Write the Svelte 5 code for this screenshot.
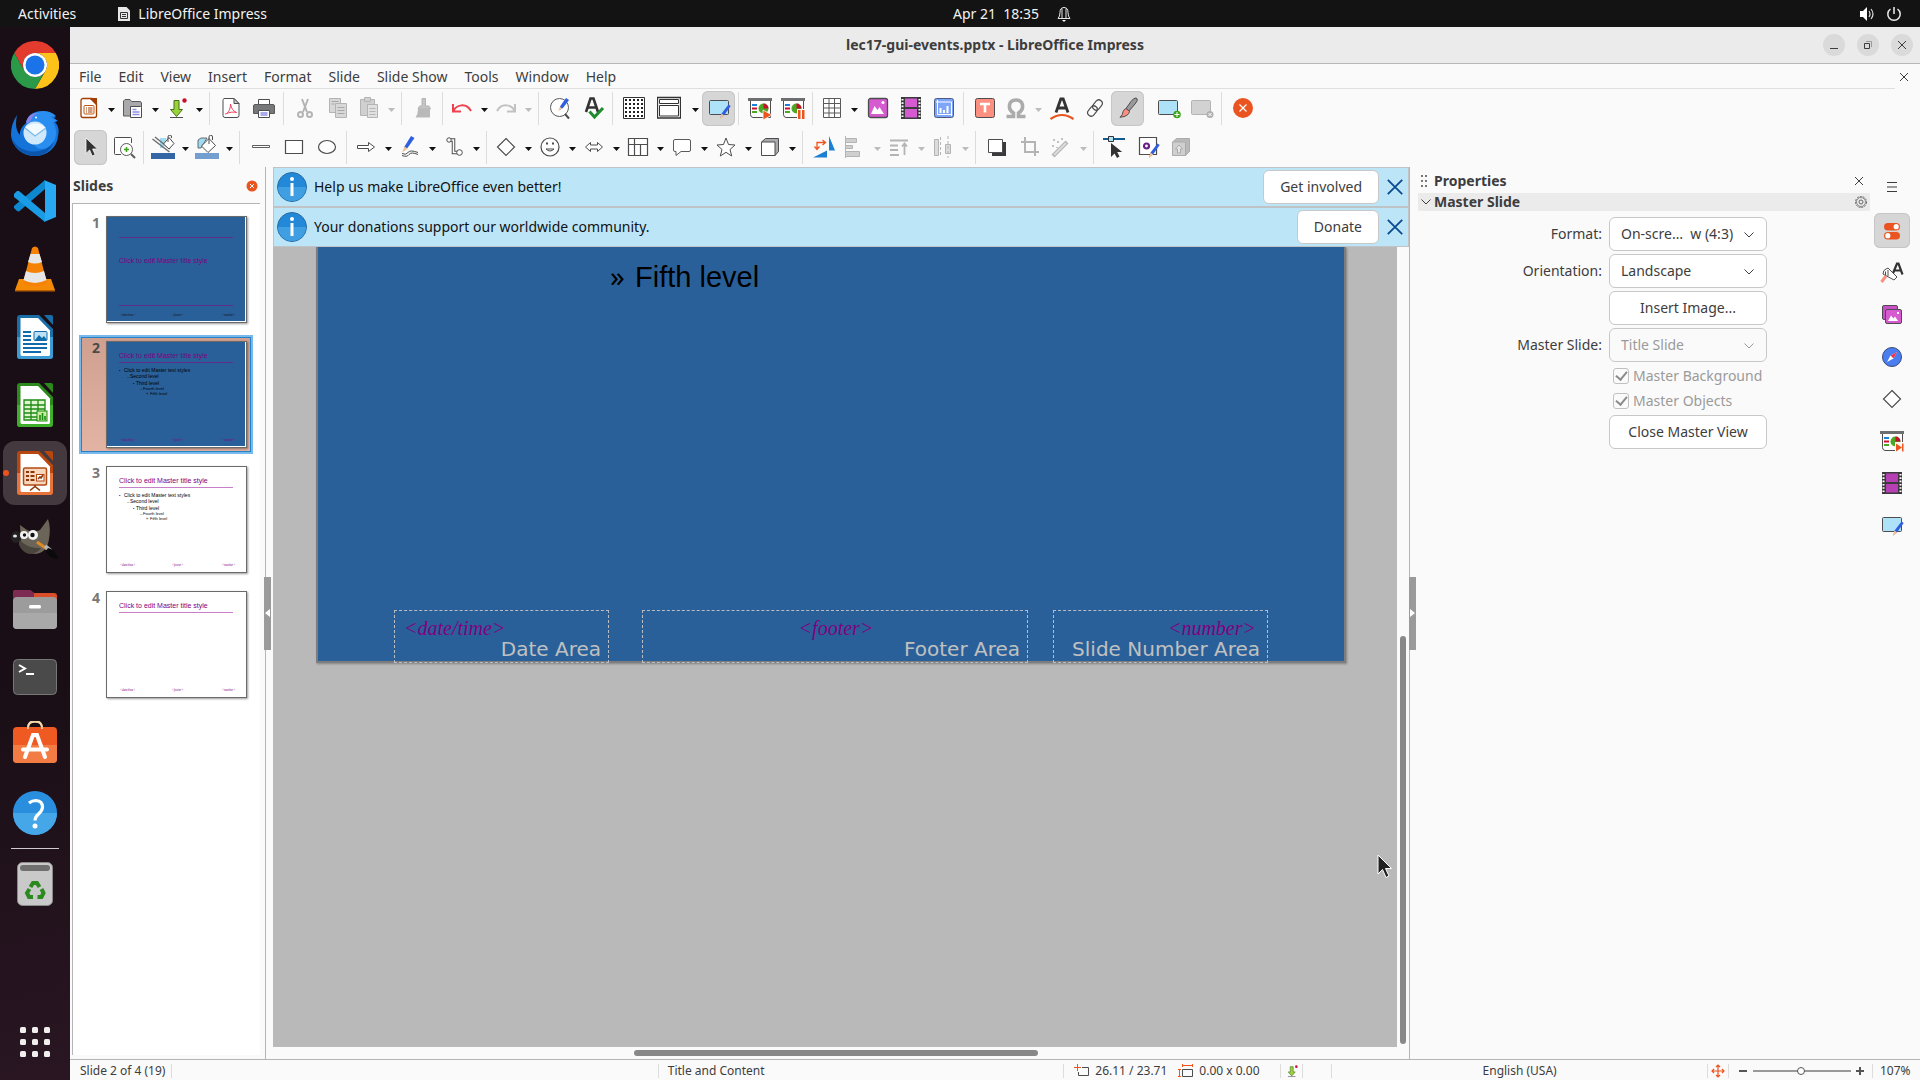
<script lang="ts">
	interface Tool {
		icon?: string,
		label?: string,
		menu?: boolean,
		off?: boolean,
		on?: boolean,
		wide?: boolean,
		sep?: boolean,
		gap?: boolean,
	}

	const menus = ["File", "Edit", "View", "Insert", "Format", "Slide", "Slide Show", "Tools", "Window", "Help"];

	const standardBar: Tool[] = [
		{ icon: "new", label: "New", menu: true },
		{ icon: "open", label: "Open", menu: true },
		{ icon: "save", label: "Save", menu: true },
		{ sep: true },
		{ icon: "pdf", label: "Export as PDF" },
		{ icon: "print", label: "Print" },
		{ sep: true },
		{ icon: "cut", label: "Cut", off: true },
		{ icon: "copy", label: "Copy", off: true },
		{ icon: "paste", label: "Paste", off: true, menu: true },
		{ sep: true },
		{ icon: "clone", label: "Clone Formatting", off: true },
		{ sep: true },
		{ icon: "undo", label: "Undo", menu: true },
		{ icon: "redo", label: "Redo", off: true, menu: true },
		{ sep: true },
		{ icon: "find", label: "Find and Replace" },
		{ icon: "spell", label: "Spelling" },
		{ sep: true },
		{ icon: "grid", label: "Display Grid" },
		{ icon: "views", label: "Display Views", menu: true, wide: true },
		{ icon: "master", label: "Master Slide", on: true },
		{ sep: true },
		{ icon: "play", label: "Start from First Slide" },
		{ icon: "playcur", label: "Start from Current Slide" },
		{ sep: true },
		{ icon: "table", label: "Table", menu: true },
		{ icon: "image", label: "Insert Image" },
		{ icon: "film", label: "Insert Audio or Video" },
		{ icon: "chart", label: "Insert Chart" },
		{ sep: true },
		{ icon: "textbox", label: "Insert Text Box" },
		{ icon: "omega", label: "Special Character", off: true, menu: true },
		{ icon: "fontwork", label: "Fontwork" },
		{ icon: "link", label: "Hyperlink" },
		{ icon: "draw", label: "Show Draw Functions", on: true },
		{ gap: true },
		{ icon: "newmaster", label: "New Master" },
		{ icon: "delmaster", label: "Delete Master", off: true },
		{ sep: true },
		{ icon: "closemaster", label: "Close Master View" },
	];

	const drawingBar: Tool[] = [
		{ icon: "select", label: "Select", on: true },
		{ icon: "zoom", label: "Zoom & Pan" },
		{ sep: true },
		{ icon: "linecolor", label: "Line Color", menu: true },
		{ icon: "fillcolor", label: "Fill Color", menu: true },
		{ sep: true },
		{ icon: "line", label: "Line" },
		{ icon: "rect", label: "Rectangle" },
		{ icon: "ellipse", label: "Ellipse" },
		{ sep: true },
		{ icon: "arrow", label: "Lines and Arrows", menu: true },
		{ icon: "curve", label: "Curves and Polygons", menu: true },
		{ icon: "connector", label: "Connectors", menu: true },
		{ sep: true },
		{ icon: "diamond", label: "Basic Shapes", menu: true },
		{ icon: "smile", label: "Symbol Shapes", menu: true },
		{ icon: "blockarrow", label: "Block Arrows", menu: true },
		{ icon: "flow", label: "Flowchart", menu: true },
		{ icon: "callout", label: "Callouts", menu: true },
		{ icon: "star", label: "Stars and Banners", menu: true },
		{ icon: "cube", label: "3D Objects", menu: true },
		{ sep: true },
		{ icon: "rotate", label: "Rotate" },
		{ icon: "align", label: "Align Objects", off: true, menu: true },
		{ icon: "arrange", label: "Arrange", off: true, menu: true },
		{ icon: "distribute", label: "Distribute", off: true, menu: true },
		{ sep: true },
		{ icon: "shadow", label: "Shadow" },
		{ icon: "crop", label: "Crop Image", off: true },
		{ icon: "wand", label: "Filter", off: true, menu: true },
		{ sep: true },
		{ icon: "points", label: "Points" },
		{ icon: "glue", label: "Glue Points" },
		{ icon: "extrude", label: "Toggle Extrusion", off: true },
	];

	const sideTabs = [
		{ icon: "tabprops", label: "Properties", on: true },
		{ icon: "tabstyles", label: "Styles" },
		{ icon: "tabgallery", label: "Gallery" },
		{ icon: "tabnav", label: "Navigator" },
		{ icon: "diamond", label: "Shapes" },
		{ icon: "tabtrans", label: "Slide Transition" },
		{ icon: "tabfilm", label: "Animation" },
		{ icon: "master", label: "Master Slides" },
	];

	const pencil = `<path d="M21.5 8.500l2.200 1.400-6.700 9.600-3.600 2.500 1-4.200z" fill="#2f5fe0"/><path d="M14.500 17.600l2.600 1.900-4.200 3.700z" fill="#f6c192"/>`;
	const board = `<path d="M2.500 4.500v14a3 3 0 0 0 2.500 3h17.500v-17z" fill="#fff" stroke="#4d4d4f"/><path d="M0 2h24v3H0z" fill="#6d6e70"/><path d="M4 8h5v2H4z" fill="#1e7fd6"/><path d="M4 11.500h5v2H4z" fill="#c8102e"/><path d="M4 15h5v2H4z" fill="#4aa822"/><circle cx="15.500" cy="12.500" r="5" fill="#4aa822"/><path d="M15.500 12.500v-5a5 5 0 0 1 5 5z" fill="#c8102e"/>`;
	const holes = [0, 1, 2, 3, 4, 5].map((i) => `<path d="M2.500 ${3 + i * 3.3}h2v1.600h-2zM19.500 ${3 + i * 3.3}h2v1.600h-2z" fill="#fff"/>`).join("");
	const film = (c: string) => `<path d="M2 1h20v22H2z" fill="#3a3a3c"/>${holes}<path d="M6 2.500h12v8.500H6zM6 13h12v8.500H6z" fill="${c}"/>`;
	const dots = [3, 7, 11, 15, 19].map((y) => [3, 7, 11, 15, 19].map((x) => `<path d="M${x} ${y}h2v2h-2z"/>`).join("")).join("");

	const icons: Record<string, string> = {
		new: `<path d="M6 2.500h9l4.500 5v12a2 2 0 0 1-2 2H6a2 2 0 0 1-2-2v-15a2 2 0 0 1 2-2z" fill="#fff" stroke="#a33e03" stroke-width="1.300"/><path d="M12 2h8v8z" fill="#a33e03"/><rect x="7" y="9.500" width="10" height="8.500" rx="1" fill="none" stroke="#c2560f"/><path d="M9 12h1M9 14h1M9 16h1M11 12h4.500M11 14h4.500M11 16h4.500" stroke="#a33e03"/>`,
		open: `<path d="M2.500 20V5l1.500-1.500h5l1.500 2h9l1 1.500v13z" fill="#a9a9ab" stroke="#5a5a5c"/><path d="M9.500 10.500h10l1 1v10h-11z" fill="#fff" stroke="#4d4d4f"/><path d="M11.500 13.500h4M11.500 16h7M11.500 18.500h7" stroke="#8f8fe6" stroke-width="1.300"/>`,
		save: `<path d="M9 4.500h5v9h3.500l-6 7-6-7H9z" fill="#97d43a" stroke="#4d6b1f"/><path d="M5 21.500h13" stroke="#4d4d4f"/><circle cx="19.500" cy="4.500" r="2.200" fill="#c8102e"/>`,
		pdf: `<path d="M5 2.500h10l5 5v12a2 2 0 0 1-2 2H6a2 2 0 0 1-2-2v-15a2 2 0 0 1 1-2z" fill="#fff" stroke="#4d4d4f"/><path d="M15 2.500v5h5z" fill="#c9c9cb" stroke="#4d4d4f"/><path d="M6.500 18c3-1 5-5 5-10 .5 4 3 7.500 6 8.500-3-.8-7-.5-11 1.500z" fill="none" stroke="#f2415a"/>`,
		print: `<path d="M6.500 9V3.500h11V9" fill="#fff" stroke="#4d4d4f"/><path d="M3 8.500h18q1.500 0 1.500 1.500v7.500h-21V10q0-1.500 1.500-1.500z" fill="#77787a" stroke="#5a5a5c"/><path d="M6.500 14.500h11v7h-11z" fill="#fff" stroke="#4d4d4f"/><path d="M8.500 17h7M8.500 19h7" stroke="#8f8fe6" stroke-width="1.300"/>`,
		cut: `<g fill="none" stroke="#b4b4b4" stroke-width="2"><path d="M9 3l5 13M15 3l-5 13"/><circle cx="7.500" cy="18.500" r="2.500"/><circle cx="16.500" cy="18.500" r="2.500"/></g>`,
		copy: `<g fill="#d8d8d8" stroke="#b4b4b4"><path d="M3.500 2.500h11v14h-11z"/><path d="M9.500 7.500h11v14h-11z"/><path d="M5.500 5.500h7M5.500 8h3M11.500 11.500h7M11.500 14.500h7M11.500 17.500h7" stroke="#a8a8a8"/></g>`,
		paste: `<g fill="#d0d0d0" stroke="#b4b4b4"><path d="M3.500 3.500h14v16h-14z"/><path d="M7.500 1.500h6v4h-6z"/><path d="M10.500 8.500h10v13h-10z" fill="#e0e0e0"/><path d="M12.500 12.500h6M12.500 15.500h6M12.500 18.500h6"/></g>`,
		clone: `<path d="M11 2.500h3.500v7.500H18l1.500 3H7l1.500-3H11z" fill="#c4c4c4" stroke="#b4b4b4"/><path d="M7 13h12v8.500H4.500Q7 18 7 13z" fill="#b9b9b9"/>`,
		undo: `<path d="M3 8v7.500h8M3.500 15C6 9 16 6 21 15" fill="none" stroke="#f0414e" stroke-width="2"/>`,
		redo: `<path d="M21 8v7.500h-8M20.500 15C18 9 8 6 3 15" fill="none" stroke="#c2c2c2" stroke-width="2"/>`,
		find: `<circle cx="11.500" cy="11.500" r="9" fill="#fff" stroke="#5a5a5c"/><path d="M17 18l4 4.500" stroke="#4d4d4f" stroke-width="2"/><path d="M18 2l3 2-6 8-3.500 2 .8-4z" fill="#2f5fe0"/><path d="M12 11l2.300 1.600L10 15z" fill="#f6c192"/>`,
		spell: `<path d="M5 16L9.500 2.500h3L17 16M7 11.500h8.500" fill="none" stroke="#333" stroke-width="2.600"/><path d="M8.500 15.500l5 5.500 8.500-9" fill="none" stroke="#1e8c2c" stroke-width="3"/>`,
		grid: `<path d="M1.500 1.500h21v21h-21z" fill="#fff" stroke="#333"/><g fill="#222">${dots}</g>`,
		views: `<path d="M.500 1.500h23v20.500H.500z" fill="#fff" stroke="#333" stroke-width="1.300"/><path d="M2.500 3.500h19v4h-19zM2.500 9.500h19v10.500h-19z" fill="none" stroke="#333"/>`,
		master: `<rect x="2.500" y="4.500" width="19" height="14" rx="1" fill="#aee2f8" stroke="#4d4d4f"/>${pencil}`,
		play: `${board}<path d="M15 14l9 5-9 5z" fill="#f0541e" stroke="#fafafa" stroke-width=".8"/>`,
		playcur: `${board}<path d="M16 13h8v10h-8z" fill="#fafafa"/><path d="M17 14h2.500v9H17zM21 14h2.500v9H21z" fill="#f0541e"/>`,
		table: `<path d="M3.500 2.500h17v19h-17zM3.500 7.500h17M3.500 12h17M3.500 17h17M9 2.500v19M14.500 2.500v19" fill="#fff" stroke="#5a5a5c"/>`,
		image: `<rect x="2.500" y="2.500" width="19" height="19" rx="2" fill="#d65ad0" stroke="#4d4d4f" stroke-width="1.300"/><path d="M5 18l3.500-8 3 4 2-3 4.500 7z" fill="#fff"/><circle cx="17" cy="6.500" r="1.500" fill="#fff"/>`,
		film: film("#d65ad0"),
		chart: `<rect x="2.500" y="2.500" width="19" height="19" rx="2" fill="#7fa5f8" stroke="#4d5a80"/><path d="M5.500 4v14.500H20M4 6h15.500V20" fill="none" stroke="#fff"/><path d="M7.500 12h2v5h-2zM11 14h2v3h-2zM14.500 10h2v7h-2z" fill="#fff"/>`,
		textbox: `<rect x="2.500" y="2.500" width="19" height="19" rx="2" fill="#fb8f80" stroke="#4d4d4f"/><path d="M7 8h10M12 8v8.500" stroke="#fff" stroke-width="2.600"/>`,
		omega: `<path d="M2.500 20.500h7v-3.500C3.500 13.500 4 4 12 4s8.500 9.500 2.500 13v3.500h7" fill="none" stroke="#ababab" stroke-width="3.600"/>`,
		fontwork: `<path d="M6 16.500L10.800 3h2.400L18 16.500M8 12h8" fill="none" stroke="#333" stroke-width="2.800"/><path d="M.500 23q11.500-8 23 0" fill="none" stroke="#e8541e" stroke-width="2.200"/>`,
		link: `<g fill="none" stroke="#4d4d4f" stroke-width="1.200"><rect x="11" y="3.500" width="7" height="11" rx="3.500" transform="rotate(40 14.500 9)"/><rect x="6" y="9.500" width="7" height="11" rx="3.500" transform="rotate(40 9.500 15)"/></g>`,
		draw: `<path d="M20 2q3 1-1 6l-6 7-3-2.500 5-7q3-4 5-3.500z" fill="#9a9a9c" stroke="#4d4d4f"/><path d="M10 12.500l3.500 2.800q-.5 5-9.500 6 3-2.500 3-5.500 1-2.500 3-3.300z" fill="#fb8f80" stroke="#4d4d4f"/>`,
		newmaster: `<rect x="1.500" y="4.500" width="19" height="14" rx="1" fill="#aee2f8" stroke="#4d4d4f"/><circle cx="20" cy="18.500" r="3.800" fill="#3fa31b"/><path d="M20 16v5M17.500 18.500h5" stroke="#fff"/>`,
		delmaster: `<rect x="1.500" y="4.500" width="19" height="14" rx="1" fill="#d2d2d2" stroke="#b4b4b4"/><circle cx="20" cy="18.500" r="3.500" fill="#b0b0b0"/><path d="M18.500 17l3 3M21.500 17l-3 3" stroke="#fff"/>`,
		closemaster: `<circle cx="12" cy="12" r="10" fill="#ea5421"/><path d="M8.500 8.500l7 7M15.500 8.500l-7 7" stroke="#fff" stroke-width="1.200"/>`,
		select: `<path d="M7 3v15.500l3.600-3.500 2.600 6 3-1.300-2.600-5.700h5z" fill="#333" stroke="#fafafa" stroke-width=".8"/>`,
		zoom: `<path d="M19.500 8V3.500a1 1 0 0 0-1-1h-15a1 1 0 0 0-1 1v15a1 1 0 0 0 1 1H9" fill="#fff" stroke="#4d4d4f"/><circle cx="14.500" cy="14.500" r="6" fill="#fff" stroke="#5a5a5c"/><path d="M19 19l4 4" stroke="#5a5a5c" stroke-width="2"/><path d="M14.500 12v5M12 14.500h5" stroke="#3fa31b" stroke-width="1.500"/>`,
		linecolor: `<path d="M9 3h6v4l-3 6H9z" fill="#9fdcf3"/><path d="M1.500 4l17 13M4 2l15 12" stroke="#6d6e70" stroke-width="1.500"/><path d="M18 2.500l5 6-5 5.500-5.500-5z" fill="#fff" stroke="#4d4d4f"/><path d="M17 7V2q0-2 2-2t1.500 3" fill="none" stroke="#4d4d4f"/><path d="M0 18h24v6H0z" fill="#3465a4"/>`,
		fillcolor: `<path d="M3 13V5l3-2h6L6 13z" fill="#9fdcf3" stroke="#4d4d4f" stroke-width=".8"/><path d="M14 3.500l6.500 7L13 17.500 6.500 11z" fill="#fff" stroke="#4d4d4f"/><path d="M14 9V2q0-1.800 1.800-1.800T17.500 2v3" fill="none" stroke="#4d4d4f"/><path d="M0 18h24v6H0z" fill="#729fcf"/>`,
		line: `<path d="M3.500 10.500h17v2h-17z" fill="#fff" stroke="#4d4d4f" stroke-width=".9"/>`,
		rect: `<path d="M3.500 5.500h17v13h-17z" fill="#fff" stroke="#4d4d4f" stroke-width="1.200"/>`,
		ellipse: `<ellipse cx="12" cy="12" rx="8.500" ry="6.500" fill="#fff" stroke="#4d4d4f" stroke-width="1.200"/>`,
		arrow: `<path d="M3.500 10.500h11v-3l6 4.500-6 4.500v-3h-11z" fill="#fff" stroke="#4d4d4f"/>`,
		curve: `<path d="M13 1l3.500 2-7 10-4 3 1-4.500z" fill="#2f5fe0"/><path d="M6.500 11.500L9.500 13.500 4 17.500z" fill="#f6c192"/><path d="M4 18.500q4 2 6-1t10 0M4 20.500q5 2 7-1t9 0" fill="none" stroke="#4d4d4f"/>`,
		connector: `<path d="M8 5h3.500v12.500H17" fill="none" stroke="#4d4d4f" stroke-width="3.500"/><path d="M8 5h3.500v12.500H17" fill="none" stroke="#fff" stroke-width="1.500"/><circle cx="7" cy="5" r="2.200" fill="#fff" stroke="#4d4d4f"/><circle cx="17.500" cy="17.500" r="2.800" fill="#fff" stroke="#4d4d4f"/>`,
		diamond: `<path d="M12 3.500l8.500 8.500-8.500 8.500L3.500 12z" fill="#fff" stroke="#4d4d4f" stroke-width="1.200"/>`,
		smile: `<circle cx="12" cy="12" r="9" fill="#fff" stroke="#4d4d4f" stroke-width="1.200"/><path d="M8 7.500h2v2H8zM14 7.500h2v2h-2z" fill="#4d4d4f"/><path d="M8 14q4 4 8 0z" fill="#fff" stroke="#4d4d4f"/>`,
		blockarrow: `<path d="M3.500 12l5-4.500v2.500h7V7.500l5 4.500-5 4.500V14h-7v2.500z" fill="#fff" stroke="#4d4d4f"/>`,
		flow: `<path d="M2.500 3.500h19v17h-19zM2.500 9.500h19M8.500 3.500v17M14.500 9.500v11" fill="#fff" stroke="#4d4d4f" stroke-width="1.200"/>`,
		callout: `<path d="M5 4.500h14q1.500 0 1.500 1.500v9q0 1.500-1.500 1.500h-8L6 20.500v-4H5Q3.500 16.500 3.500 15V6Q3.500 4.500 5 4.500z" fill="#fff" stroke="#5a5a5c"/>`,
		star: `<path d="M12 3l2.500 6.500 6.500.5-5 4.500 1.700 6.500L12 17.300 6.300 21 8 14.500 3 10l6.500-.5z" fill="#fff" stroke="#4d4d4f"/>`,
		cube: `<path d="M3.500 7l4-3.500h13v13L17 20.500z" fill="#a9a9ab" stroke="#4d4d4f"/><path d="M3.500 7H17v13.500H3.500z" fill="#fff" stroke="#4d4d4f"/>`,
		rotate: `<path d="M17 1l6 14.500h-6zM1 22.500l14-7v7z" fill="#1b7fd4"/><path d="M5 14V7.500h8M2.500 11.500L5 14.500l2.500-3M10.500 5l3 2.500-3 2.500" fill="none" stroke="#f0541e" stroke-width="1.300"/>`,
		align: `<path d="M2.500 1v22" stroke="#b4b4b4"/><g fill="#cfcfcf" stroke="#b4b4b4"><path d="M2.500 3.500h11v4h-11zM2.500 10.500h7v3h-7zM2.500 16.500h14v5h-14z"/></g>`,
		arrange: `<path d="M3 5.500h18M3 10.500h8M3 15h8M3 20h9M17.500 20V9M15 11.500L17.500 8.500l2.500 3" fill="none" stroke="#b4b4b4" stroke-width="1.800"/>`,
		distribute: `<g fill="#dcdcdc" stroke="#b4b4b4"><path d="M3.500 4.500h4v16h-4zM14.500 9.500h5v9h-5z"/><path d="M9.500 2v20M17 1v22" stroke-dasharray="3 2"/></g>`,
		shadow: `<path d="M7 7h14v14H7z" fill="#3a3a3c"/><path d="M3.500 4.500h14v13h-14z" fill="#fff" stroke="#4d4d4f"/>`,
		crop: `<path d="M7 2v15h14M3 7h14v14" fill="none" stroke="#b4b4b4" stroke-width="2"/>`,
		wand: `<path d="M4 21L18 7" stroke="#b4b4b4" stroke-width="4"/><path d="M5 20L17 8" stroke="#dcdcdc" stroke-width="2"/><path d="M5 4v2M9 6v2M13 3v2M4 10v2M8 12v1" stroke="#b4b4b4" stroke-width="1.600"/>`,
		points: `<path d="M0 4h22" stroke="#0f5c91" stroke-width="2"/><path d="M5.500 1.500h5v5h-5z" fill="#aee2f8" stroke="#333"/><path d="M8 8v14l3.500-3.500 2.500 4.500 2.500-1.500-2.300-4.500h5z" fill="#333"/>`,
		glue: `<path d="M3.500 2.500h17v17h-17z" fill="#fff" stroke="#4d4d4f" stroke-width="1.200"/><circle cx="10.500" cy="11" r="2.500" fill="#fff" stroke="#6b1f86" stroke-width="2.200"/>${pencil}`,
		extrude: `<path d="M3.500 7l4-3.500h13v13l-4 4z" fill="#b9b9b9" stroke="#ababab"/><path d="M3.500 7h13v13.500h-13z" fill="#cfcfcf" stroke="#ababab"/><path d="M8.500 18v-4h-2L10 10l3.500 4h-2v4z" fill="#e6e6e6" stroke="#ababab"/>`,
		tabprops: `<rect x="4" y="4" width="16" height="7.500" rx="3.750" fill="#ea5421"/><circle cx="16.200" cy="7.700" r="2.600" fill="#fff"/><rect x="4" y="13" width="16" height="7.500" rx="3.750" fill="#ea5421"/><circle cx="7.800" cy="16.700" r="2.600" fill="#fff"/>`,
		tabstyles: `<path d="M12.500 13.500L17 2.500h1.500l4 11M14 9.500h6.500" fill="none" stroke="#333" stroke-width="2.200"/><path d="M3 13q0-4 3-5l2-1 9 9-3 3z" fill="#fff" stroke="#4d4d4f"/><path d="M6 15l-4.500 6" stroke="#fb8f80" stroke-width="3"/><path d="M5.500 14V10.500M8 15V9" stroke="#4d4d4f"/>`,
		tabgallery: `<rect x="2.500" y="2.500" width="15" height="14" rx="1.500" fill="#c94fc6" stroke="#4d4d4f"/><rect x="5.500" y="6.500" width="16" height="14" rx="1.500" fill="#d65ad0" stroke="#4d4d4f"/><path d="M8 18l3-5.500 2.500 3 1.500-2 3 4.500z" fill="#fff"/><path d="M17 9h2v2h-2z" fill="#fff"/>`,
		tabnav: `<circle cx="12" cy="12" r="9.500" fill="#4a7df0" stroke="#3a4a78"/><path d="M17 7l-3.500 6.500L7 17l3.500-6.500z" fill="#fff"/><path d="M17 7l-3.500 6.500-3-3z" fill="#e8384f"/>`,
		tabtrans: `${board}<path d="M15 13h9v10h-9z" fill="#fafafa"/><path d="M16 14.500l6 4-6 4zM22 14.500h1.500v8H22z" fill="#f0541e"/>`,
		tabfilm: film("#b63fb4"),
	};

	// LibreOffice document icon: colored frame, cut corner
	function docIcon(dark: string, light: string, inner: string) {
		return `<path d="M9 2h19l14 14v27a3 3 0 0 1-3 3H9a3 3 0 0 1-3-3V5a3 3 0 0 1 3-3z" fill="${dark}"/>
			<path d="M6 24h36v19a3 3 0 0 1-3 3H9a3 3 0 0 1-3-3z" fill="${light}"/>
			<path d="M9.500 5h17.500L39 17.500V42l-1 1H10.500l-1-1z" fill="#fff"/>
			<path d="M33 2h7a2 2 0 0 1 2 2v8z" fill="${dark}"/>${inner}`;
	}

	const dock = [
		{ label: "Google Chrome", art: `<path d="M3.200 12A24 24 0 0 1 44.800 12H24A12 12 0 0 0 13.600 30z" fill="#e33b2e"/><path d="M44.800 12A24 24 0 0 1 24 48L34.400 30A12 12 0 0 0 24 12z" fill="#fdc21a"/><path d="M24 48A24 24 0 0 1 3.200 12L13.600 30A12 12 0 0 0 34.400 30z" fill="#2a9a48"/><circle cx="24" cy="24" r="12" fill="#fff"/><circle cx="24" cy="24" r="9.500" fill="#1a73e8"/>` },
		{ label: "Thunderbird", art: `<path d="M6 6Q0 15 0 26a24 22 0 0 0 24 21 23 21 0 0 0 23-20Q49 18 44 13l3-1-4-3 2-1-5-3Q30 0 22 4q-6 3-7 10Q8 20 9 26 3 20 6 6z" fill="#1373d9"/><path d="M17 13q3-11 15-11 8 0 13 5l-5 1 6 4-4 1q5 8 2 17-4 10-13 10-8 0-8-8z" fill="#2a8df0"/><path d="M15 13Q18 3 28 4q-6 1-8 7l-4 4z" fill="#8f82e8"/><path d="M0 24q2 14 17 18 16 3 26-9-6 14-19 14Q3 46 0 24z" fill="#0b55ad"/><circle cx="24" cy="24" r="11.500" fill="#cfe9fb"/><path d="M14 19q10-9 21 0l-10 8z" fill="#f2faff"/><path d="M14 19l10 8 11-8" fill="none" stroke="#7db9e8" stroke-width="1.300"/><circle cx="25" cy="8.500" r="1" fill="#fff"/>` },
		{ label: "Visual Studio Code", art: `<path d="M3 31l3 3 2 .500L34 12V3L3 29z" fill="#0d87cf"/><path d="M3 17l3-3h2L34 36v9L3 20z" fill="#1a9be6"/><path d="M33 3l12 5v32l-12 5q1 0 1-3V6q0-3-1-3z" fill="#27a9f3"/>` },
		{ label: "VLC media player", art: `<path d="M8 34h32l4 11H4z" fill="#f58a07"/><path d="M4 45h40v1.500H4z" fill="#b85c00"/><path d="M21 3q3-3 6 0l9 35q-12 7-24 0z" fill="#f58207"/><path d="M19.500 9h9l2.500 8q-7 3-14 0zM15 26q9 4 18 0l2.500 9q-11.500 6-23 0z" fill="#e6e6e6"/>` },
		{ label: "LibreOffice Writer", art: docIcon("#1a6ea8", "#3c9bd3", `<path d="M12 19h8M12 23h8M12 27h8M12 31h24M12 35h24M12 39h18" stroke="#0f6cab" stroke-width="2"/><rect x="23" y="18.500" width="13" height="9" rx="1" fill="#bfe0f5" stroke="#0f6cab"/><path d="M24 27l4-5 3 3 2-2 3 4z" fill="#0f6cab"/>`) },
		{ label: "LibreOffice Calc", art: docIcon("#2c8a1c", "#3fae2a", `<path d="M13 19h21v20H13z" fill="#dff5d0"/><path d="M13 19h21v20H13zM13 24h21M13 28h21M13 32h21M13 36h21M20 19v20M27 19v20" fill="none" stroke="#1d8a12" stroke-width="1.300"/><rect x="26" y="30" width="10" height="10" fill="#c4ec9e" stroke="#1d8a12"/><path d="M29 34v5M31.500 32v7M34 35v4" stroke="#1d8a12" stroke-width="1.600"/>`) },
		{ label: "LibreOffice Impress", active: true, art: docIcon("#b8470f", "#e8743c", `<rect x="12.500" y="19" width="23" height="17" rx="1.500" fill="#f8d5bd" stroke="#b14a12" stroke-width="1.500"/><path d="M15 23h3M15 27h3M15 31h3M19.500 23h4M19.500 27h4M19.500 31h4" stroke="#8d3606" stroke-width="2"/><rect x="25.500" y="25.500" width="7.500" height="6.500" fill="#fff" stroke="#b14a12"/><path d="M27 30l2-2 1 1 2-3M24 36v2M19 41.500l5-4 5 4" fill="none" stroke="#8d3606" stroke-width="1.600"/>`) },
		{ label: "GIMP", art: `<path d="M9 8l7 5q6 3 13 0l8-11q3 9 1 20-2 14-14 15-11-1-14-10z" fill="#6b6458"/><path d="M8 22q8 10 22 9-4 6-12 6-7-2-10-9z" fill="#4a453c"/><ellipse cx="5" cy="20" rx="5" ry="6" fill="#222"/><ellipse cx="4" cy="19" rx="2" ry="1.500" fill="#e8e8e8"/><circle cx="13" cy="18" r="4" fill="#f2f2f2"/><circle cx="22" cy="18" r="5" fill="#f2f2f2"/><circle cx="13.500" cy="18" r="1.700" fill="#111"/><circle cx="21.500" cy="18" r="2.200" fill="#111"/><path d="M26 25l10 7" stroke="#e08a22" stroke-width="3"/><path d="M34 29l6 5" stroke="#b4b4b4" stroke-width="4"/><path d="M37 31q7 1 10 11-10-1-12-8z" fill="#0a0a0a"/>` },
		{ label: "Files", art: `<path d="M2 8a3 3 0 0 1 3-3h14l4 3h20a3 3 0 0 1 3 3v9H2z" fill="#d94f2c"/><path d="M2 8a3 3 0 0 1 3-3h14l4 3v10H2z" fill="#7d2b52"/><rect x="2" y="12" width="44" height="32" rx="4" fill="#9c9c9c"/><path d="M2 28h44v12a4 4 0 0 1-4 4H6a4 4 0 0 1-4-4z" fill="#a9a9a9"/><rect x="18" y="20" width="12" height="3.500" rx="1.500" fill="#fff"/>` },
		{ label: "Terminal", art: `<rect x="2.500" y="6.500" width="43" height="35" rx="4" fill="#4a4a4a" stroke="#777"/><path d="M8 12l6 3.500L8 19M15 21h8" fill="none" stroke="#fff" stroke-width="2"/>` },
		{ label: "Ubuntu Software", art: `<path d="M17 8q0-8 7-8t7 8" fill="none" stroke="#f3d9a8" stroke-width="2"/><rect x="2" y="6" width="44" height="36" rx="4" fill="#ef5a22"/><path d="M2 24h44v14a4 4 0 0 1-4 4H6a4 4 0 0 1-4-4z" fill="#f37c45"/><path d="M17 8V6q0-5 7-5t7 5v2" fill="none" stroke="#f3d9a8" stroke-width="1.600"/><path d="M14 36l8-22h4l8 22M12 28.500h24" fill="none" stroke="#fff" stroke-width="4" stroke-linecap="round"/>` },
		{ label: "Help", art: `<circle cx="24" cy="24" r="22" fill="#2a8edf"/><path d="M2 24h44a22 22 0 0 1-44 0z" fill="#45a6e8"/><path d="M18 14q3-2.500 7-2.500 6.500.500 6.500 6.500 0 3.500-4 7-3.500 3-3.500 6.500" fill="none" stroke="#fff" stroke-width="3.200"/><circle cx="24" cy="37" r="2.500" fill="#fff"/>` },
	];

	const trashArt = `<rect x="6.500" y="1.500" width="35" height="43" rx="5" fill="#c9c9c9" stroke="#8a8a8a"/><rect x="9" y="4" width="30" height="6" rx="3" fill="#6f6f6f"/><g fill="none" stroke="#2b8a1e" stroke-width="4"><path d="M19.500 26l2.500-4h4l2.500 4M30.500 28l2 4-2 4h-4M22 36h-4l-2-4 2.500-4"/></g>`;

	const slides = [
		{ dark: true, cover: true, body: false },
		{ dark: true, cover: false, body: true },
		{ dark: false, cover: false, body: true },
		{ dark: false, cover: false, body: false },
	];

	const levels = [
		{ x: 17, y: 30, size: 5, bullet: "•", bx: 12, text: "Click to edit Master text styles" },
		{ x: 23, y: 36, size: 5, bullet: "–", bx: 20, text: "Second level" },
		{ x: 29, y: 43, size: 5, bullet: "•", bx: 26, text: "Third level" },
		{ x: 36, y: 48, size: 4, bullet: "–", bx: 33, text: "Fourth level" },
		{ x: 43, y: 53, size: 4, bullet: "»", bx: 39, text: "Fifth level" },
	];

	let current = $state(1);
	let zoomLevel = $state(49);
</script>

{#snippet toolIcon(name: string)}
	<svg class="icon" width="24" height="24" viewBox="0 0 24 24" aria-hidden="true">{@html icons[name]}</svg>
{/snippet}

{#snippet cross(size: number)}
	<svg width={size} height={size} viewBox="0 0 10 10" aria-hidden="true"><path d="M1 1l8 8M9 1L1 9" stroke="currentColor" fill="none" /></svg>
{/snippet}

{#snippet chevron()}
	<svg width="12" height="8" viewBox="0 0 12 8" aria-hidden="true"><path d="M1.500 1.500L6 6l4.500-4.500" fill="none" stroke="currentColor" /></svg>
{/snippet}

{#snippet infoIcon()}
	<svg width="30" height="30" viewBox="0 0 30 30" aria-hidden="true">
		<circle cx="15" cy="15" r="14.500" fill="#2388d8" stroke="#2a6ca0" />
		<path d="M1 15h28a14 14 0 0 1-28 0z" fill="#3f9fe2" />
		<circle cx="15" cy="7" r="2" fill="#fff" />
		<path d="M13.500 11h3v13h-3z" fill="#fff" />
	</svg>
{/snippet}

{#snippet toolbar(name: string, tools: Tool[])}
	<div class="toolbar" role="toolbar" aria-label={name}>
		{#each tools as tool}
			{#if tool.sep}
				<span class="sep"></span>
			{:else if tool.gap}
				<span class="gap"></span>
			{:else}
				<button class="tool" class:on={tool.on} class:has-menu={tool.menu} class:wide={tool.wide} disabled={tool.off} aria-label={tool.label}>
					{@render toolIcon(tool.icon!)}
				</button>
				{#if tool.menu}
					<button class="drop" disabled={tool.off} aria-label="{tool.label} options">
						<svg width="7" height="4" viewBox="0 0 7 4"><path d="M0 0h7L3.500 4z" fill="currentColor" /></svg>
					</button>
				{/if}
			{/if}
		{/each}
	</div>
{/snippet}

<div class="desktop">
	<header class="topbar">
		<div class="top-left">
			<button class="plain">Activities</button>
			<button class="plain app-name">
				<svg width="14" height="16" viewBox="0 0 14 16" aria-hidden="true"><path d="M1 1h8.500L13 4.500V15H1z" fill="#e8e8e8" /><path d="M3.500 6.500h7v6h-7z" fill="none" stroke="#333" /><path d="M5 8.500h4M5 10.500h4" stroke="#333" /></svg>
				LibreOffice Impress
			</button>
		</div>
		<button class="plain clock">
			<span>Apr 21&nbsp; 18:35</span>
			<svg width="14" height="16" viewBox="0 0 14 16" aria-hidden="true"><path d="M1 12.500q2-2 2-6Q3 1.500 7 1.500t4 5q0 4 2 6zM5 2.500V12M9 2.500V12" fill="none" stroke="#e8e8e8" /><path d="M5 14h4l-2 2z" fill="#fff" /></svg>
		</button>
		<button class="plain tray" aria-label="System menu">
			<svg width="16" height="16" viewBox="0 0 16 16"><path d="M1 5h3l4-4v14l-4-4H1z" fill="#fff" /><path d="M10 5q2 3 0 6M12 3q4 5 0 10" fill="none" stroke="#ddd" stroke-width="1.200" /></svg>
			<svg width="16" height="16" viewBox="0 0 16 16"><path d="M4.500 3a6.200 6.200 0 1 0 7 0M8 1v7" fill="none" stroke="#eee" stroke-width="1.500" /></svg>
		</button>
	</header>

	<div class="below">
		<nav class="dock" aria-label="Dock">
			{#each dock as app}
				<button class="dock-item" class:active={app.active} aria-label={app.label}>
					<svg width="48" height="48" viewBox="0 0 48 48">{@html app.art}</svg>
				</button>
			{/each}
			<hr>
			<button class="dock-item" aria-label="Trash">
				<svg width="48" height="48" viewBox="0 0 48 48">{@html trashArt}</svg>
			</button>
			<button class="dock-item show-apps" aria-label="Show Applications">
				<svg width="30" height="30" viewBox="0 0 30 30">
					{#each [0, 12, 24] as y}
						{#each [0, 12, 24] as x}
							<rect {x} {y} width="6" height="6" rx="1.500" fill="#f0efee" />
						{/each}
					{/each}
				</svg>
			</button>
		</nav>

		<div class="window">
			<div class="titlebar">
				<h1>lec17-gui-events.pptx - LibreOffice Impress</h1>
				<div class="win-buttons">
					<button aria-label="Minimize"><svg width="10" height="10" viewBox="0 0 10 10"><path d="M1 8.500h8" stroke="#3d3d3d" /></svg></button>
					<button aria-label="Restore"><svg width="10" height="10" viewBox="0 0 10 10"><path d="M1.500 3.500h5v5h-5z" fill="none" stroke="#3d3d3d" /><path d="M3 1.500h5.500V7" fill="none" stroke="#999" /></svg></button>
					<button aria-label="Close">{@render cross(10)}</button>
				</div>
			</div>

			<div class="menubar">
				<nav class="menus">
					{#each menus as item}
						<button class="plain">{item}</button>
					{/each}
				</nav>
				<button class="plain close-doc" aria-label="Close Document">{@render cross(10)}</button>
			</div>

			<div class="toolbars">
				{@render toolbar("Standard", standardBar)}
				{@render toolbar("Drawing", drawingBar)}
			</div>

			<main>
				<section class="slides">
					<div class="slides-head">
						<h2>Slides</h2>
						<button class="plain" aria-label="Close Pane">
							<svg width="12" height="12" viewBox="0 0 12 12"><circle cx="6" cy="6" r="5.500" fill="#e9541f" /><path d="M4 4l4 4M8 4L4 8" stroke="#fff" /></svg>
						</button>
					</div>
					<div class="slide-list">
						{#each slides as slide, i}
							<button class="slide-item" class:current={current === i} onclick={() => (current = i)}>
								<span class="number">{i + 1}</span>
								<svg class="thumb" class:dark={slide.dark} viewBox="0 0 139 105">
									{#if slide.dark}
										<rect width="138" height="104" fill="#2a6099" />
									{/if}
									{#if slide.cover}
										<path d="M12 20.500h114M12 88.500h114" stroke="#5e2f8e" />
										<text x="12" y="46" font-size="7">Click to edit Master title style</text>
									{:else}
										<text x="12" y="16" font-size="7">Click to edit Master title style</text>
										<path d="M12 20.500h114" stroke={slide.dark ? "#5e2f8e" : "#c77fc7"} />
									{/if}
									{#if slide.body}
										{#each levels as l}
											<text class="body" x={l.bx} y={l.y} font-size="4">{l.bullet}</text>
											<text class="body" x={l.x} y={l.y} font-size={l.size}>{l.text}</text>
										{/each}
									{/if}
									<g class="foot" class:ink={slide.cover} font-size="3">
										<text x="13" y="99">&lt;date/time&gt;</text>
										<text x="65" y="99">&lt;footer&gt;</text>
										<text x="115" y="99">&lt;number&gt;</text>
									</g>
								</svg>
							</button>
						{/each}
					</div>
				</section>

				<div class="splitter left">
					<button aria-label="Hide slide pane"><svg width="5" height="8" viewBox="0 0 5 8"><path d="M5 0v8L0 4z" fill="#fff" /></svg></button>
				</div>

				<section class="editor">
					<div class="infobar">
						{@render infoIcon()}
						<p>Help us make LibreOffice even better!</p>
						<button class="push">Get involved</button>
						<button class="plain dismiss" aria-label="Close Infobar">{@render cross(18)}</button>
					</div>
					<div class="infobar">
						{@render infoIcon()}
						<p>Your donations support our worldwide community.</p>
						<button class="push">Donate</button>
						<button class="plain dismiss" aria-label="Close Infobar">{@render cross(18)}</button>
					</div>
					<div class="view">
						<div class="canvas">
							<div class="slide">
								<p class="fifth"><span>»</span>Fifth level</p>
								<div class="areas">
									<div class="area"><em>&lt;date/time&gt;</em><span>Date Area</span></div>
									<div class="area mid"><em>&lt;footer&gt;</em><span>Footer Area</span></div>
									<div class="area end"><em>&lt;number&gt;</em><span>Slide Number Area</span></div>
								</div>
							</div>
						</div>
						<div class="vscroll"><div class="bar"></div></div>
						<div class="hscroll"><div class="bar"></div></div>
					</div>
				</section>

				<div class="splitter right">
					<button aria-label="Hide sidebar"><svg width="5" height="8" viewBox="0 0 5 8"><path d="M0 0v8l5-4z" fill="#fff" /></svg></button>
				</div>

				<aside class="sidebar">
					<div class="deck">
						<div class="deck-title">
							<svg width="8" height="14" viewBox="0 0 8 14" aria-hidden="true"><path d="M1 1h2v2H1zM5 1h2v2H5zM1 6h2v2H1zM5 6h2v2H5zM1 11h2v2H1zM5 11h2v2H5z" fill="#777" /></svg>
							<h2>Properties</h2>
							<button class="plain" aria-label="Close Sidebar Deck">{@render cross(10)}</button>
						</div>
						<div class="panel-title">
							{@render chevron()}
							<h3>Master Slide</h3>
							<button class="plain" aria-label="More Options">
								<svg width="14" height="14" viewBox="0 0 14 14"><circle cx="7" cy="7" r="5.500" fill="none" stroke="#666" stroke-dasharray="2 1" /><circle cx="7" cy="7" r="4.500" fill="none" stroke="#888" /><circle cx="7" cy="7" r="2" fill="none" stroke="#666" /></svg>
							</button>
						</div>
						<form class="form" onsubmit={(e) => e.preventDefault()}>
							<label for="format">Format:</label>
							<div class="combo">
								<select id="format"><option>On-scre…&nbsp; w (4:3)</option></select>
								{@render chevron()}
							</div>
							<label for="orientation">Orientation:</label>
							<div class="combo">
								<select id="orientation"><option>Landscape</option><option>Portrait</option></select>
								{@render chevron()}
							</div>
							<button class="push field">Insert Image...</button>
							<label for="master">Master Slide:</label>
							<div class="combo off">
								<select id="master" disabled><option>Title Slide</option></select>
								{@render chevron()}
							</div>
							<div class="checks field">
								<label><input type="checkbox" checked disabled> Master Background</label>
								<label><input type="checkbox" checked disabled> Master Objects</label>
							</div>
							<button class="push field">Close Master View</button>
						</form>
					</div>
					<div class="tabs">
						<button class="tab-menu" aria-label="Sidebar Settings"><svg width="12" height="12" viewBox="0 0 12 12"><path d="M1 1.500h10M1 6h10M1 10.500h10" stroke="#3d3d3d" /></svg></button>
						{#each sideTabs as tab}
							<button class="tab" class:on={tab.on} aria-label={tab.label}>{@render toolIcon(tab.icon)}</button>
						{/each}
					</div>
				</aside>
			</main>

			<footer class="status">
				<span class="cell count">Slide 2 of 4 (19)</span>
				<span class="cell filler"></span>
				<span class="cell layout">Title and Content</span>
				<span class="cell pos">
					<svg width="16" height="14" viewBox="0 0 16 14" aria-hidden="true"><path d="M8 3.500h6.500v8h-10V8" fill="none" stroke="#4d4d4f" /><path d="M3.500 0v7M0 3.500h7" stroke="#f0541e" /></svg>
					<span>26.11 / 23.71</span>
					<svg width="16" height="14" viewBox="0 0 16 14" aria-hidden="true"><path d="M4.500 5.500h10v7h-10z" fill="none" stroke="#4d4d4f" /><path d="M4 1.500h11M4.500 0v3M14.500 0v3M1.500 5v8M0 5.500h3M0 12.500h3" stroke="#f0541e" /></svg>
					<span>0.00 x 0.00</span>
				</span>
				<span class="cell saved"><svg width="14" height="14" viewBox="0 0 24 24" aria-hidden="true">{@html icons.save}</svg></span>
				<span class="cell sign"></span>
				<span class="cell lang">English (USA)</span>
				<button class="plain cell fit" aria-label="Fit slide to current window">
					<svg width="14" height="14" viewBox="0 0 14 14"><path d="M7 1v12M1 7h12M5 3l2-2 2 2M5 11l2 2 2-2M3 5L1 7l2 2M11 5l2 2-2 2" fill="none" stroke="#f0541e" stroke-width="1.200" /></svg>
				</button>
				<span class="cell zoomer">
					<button class="plain" aria-label="Zoom Out"><svg width="10" height="10" viewBox="0 0 10 10"><path d="M1 5h8" stroke="#555" stroke-width="2" /></svg></button>
					<input type="range" min="0" max="100" bind:value={zoomLevel} aria-label="Zoom">
					<button class="plain" aria-label="Zoom In"><svg width="10" height="10" viewBox="0 0 10 10"><path d="M1 5h8M5 1v8" stroke="#555" stroke-width="2" /></svg></button>
				</span>
				<span class="cell percent">107%</span>
			</footer>
		</div>
	</div>

	<svg class="pointer" width="16" height="26" viewBox="0 0 16 26" aria-hidden="true"><path d="M1 1v19l4.500-4.500 3.500 8 3-1.500-3.500-7.500h6z" fill="#222" stroke="#fff" /></svg>
</div>

<style>
	:global(body) {
		background: #1c0f17;
	}
	.desktop {
		position: relative;
		display: flex;
		flex-direction: column;
		height: 100vh;
		overflow: hidden;
		font: 14px/20px "Noto Sans", "Open Sans", sans-serif;
		color: #3d3d3d;
	}
	.desktop * {
		box-sizing: border-box;
	}
	button {
		display: flex;
		align-items: center;
		justify-content: center;
		margin: 0;
		padding: 0;
		font: inherit;
		color: inherit;
		border: 0;
		background: none;
	}
	svg {
		display: block;
		flex: none;
	}
	h1, h2, h3, p {
		margin: 0;
		font-size: 14px;
	}

	/* top panel and dock */
	.topbar {
		display: grid;
		grid-template-columns: 1fr auto 1fr;
		align-items: center;
		height: 27px;
		padding: 0 18px;
		color: #f2f2f2;
		background: #131313;
	}
	.top-left {
		display: flex;
		gap: 41px;
	}
	.app-name {
		gap: 7px;
	}
	.clock {
		gap: 18px;
		padding-left: 104px;
	}
	.tray {
		gap: 11px;
		justify-self: end;
	}
	.below {
		display: flex;
		flex: 1;
		min-height: 0;
	}
	.dock {
		display: flex;
		flex-direction: column;
		gap: 4px;
		width: 70px;
		padding: 6px 3px;
		background: linear-gradient(165deg, #190e15 60%, #291622);
	}
	.dock-item {
		position: relative;
		height: 64px;
		border-radius: 12px;
	}
	.dock-item.active {
		background: #43393f;
	}
	.dock-item.active::before {
		content: "";
		position: absolute;
		left: 0;
		width: 6px;
		height: 6px;
		border-radius: 50%;
		background: #e95420;
	}
	.dock hr {
		width: 48px;
		margin: -1px auto 0;
		border: 0;
		border-top: 1px solid #cfcbce;
	}
	.show-apps {
		margin-top: auto;
	}

	/* window frame */
	.window {
		display: flex;
		flex: 1;
		flex-direction: column;
		min-width: 0;
		background: #fafafa;
	}
	.titlebar {
		display: grid;
		grid-template-columns: 1fr auto 1fr;
		align-items: center;
		height: 37px;
		padding: 0 7px;
		border-bottom: 1px solid #b8b8b8;
		background: #ebebeb;
	}
	.titlebar h1 {
		grid-column: 2;
	}
	.win-buttons {
		display: flex;
		gap: 12px;
		justify-self: end;
	}
	.win-buttons button {
		width: 22px;
		height: 22px;
		border-radius: 50%;
		background: #dadada;
	}
	.menubar {
		display: flex;
		height: 25px;
	}
	.menus {
		display: flex;
		flex: 1;
		gap: 17px;
		padding: 1px 0 0 9px;
		border-bottom: 1px solid #dfdfdf;
	}
	.close-doc {
		width: 18px;
		margin-right: 7px;
	}
	.toolbars {
		display: flex;
		flex-direction: column;
		gap: 4px;
		padding: 2px 4px;
	}
	.toolbar {
		display: flex;
		height: 35px;
	}
	.tool {
		align-items: flex-start;
		width: 33px;
		height: 35px;
		padding-top: 5px;
		border-radius: 6px;
	}
	.tool.has-menu {
		padding-right: 3px;
	}
	.tool.wide {
		width: 41px;
	}
	.tool.on, .tab.on {
		background: #d6d6d6;
		box-shadow: inset 0 0 0 1px #c6c6c6;
	}
	.drop {
		width: 11px;
		padding: 3px 2px 0 0;
		color: #111;
	}
	.drop:disabled {
		color: #bcbcbc;
	}
	.sep {
		width: 1px;
		margin: 1px 4px 1px 3px;
		background: #dcdcdc;
	}
	.gap {
		width: 8px;
	}

	main {
		display: flex;
		flex: 1;
		min-height: 0;
	}

	/* slide pane */
	.slides {
		display: flex;
		flex-direction: column;
		width: 195px;
		padding: 0 5px 4px 2px;
	}
	.slides-head {
		display: flex;
		align-items: center;
		justify-content: space-between;
		height: 36px;
		padding: 1px 2px 0 1px;
	}
	.slide-list {
		flex: 1;
		padding: 6px;
		border: solid #b5b5b5;
		border-width: 1px 0 0 1px;
		background: #fff;
	}
	.slide-item {
		align-items: flex-start;
		justify-content: flex-start;
		width: 174px;
		height: 119px;
		margin-bottom: 6px;
		padding: 6px;
	}
	.slide-item.current {
		padding: 4px;
		border: 2px solid #79b8ea;
		background: linear-gradient(#cf9f90, #e3b4a4);
		box-shadow: inset 0 0 0 1px #2482c8;
	}
	.number {
		width: 21px;
		padding-right: 6px;
		font-weight: bold;
		line-height: 14px;
		text-align: right;
		color: #777;
	}
	.current .number {
		color: #4a4a4a;
	}
	.thumb {
		width: 141px;
		height: 107px;
		border: 1px solid #6a6a6a;
		background: #fff;
		box-shadow: 1px 1px 2px rgba(0, 0, 0, .4);
		font-family: "Liberation Sans", sans-serif;
		fill: #800080;
	}
	.thumb .body {
		fill: #000;
	}
	.thumb .foot {
		font-family: "Liberation Serif", serif;
		font-style: italic;
	}
	.thumb .ink {
		fill: #111;
	}

	.splitter {
		position: relative;
		display: flex;
		align-items: center;
		width: 8px;
		border-left: 1px solid #b5b5b5;
	}
	.splitter.right {
		width: 9px;
	}
	.splitter button {
		width: 7px;
		height: 73px;
		margin-left: -1px;
		background: #9a9a9a;
	}
	.splitter.left button {
		margin-left: -2px;
	}

	/* editing area */
	.editor {
		display: flex;
		flex: 1;
		flex-direction: column;
		min-width: 0;
	}
	.infobar {
		display: flex;
		align-items: center;
		height: 40px;
		padding: 0 4px 0 3px;
		border: 1px solid #bfc3c5;
		color: #111;
		background: #bde5f8;
	}
	.infobar p {
		flex: 1;
		padding-left: 7px;
	}
	.push {
		height: 34px;
		padding: 0 16px;
		border: 1px solid #c8c8c8;
		border-radius: 6px;
		color: #3d3d3d;
		background: #fff;
	}
	.dismiss {
		margin-left: 7px;
		color: #0a4a8f;
	}
	.view {
		display: grid;
		flex: 1;
		grid-template-columns: 1fr 12px;
		grid-template-rows: 1fr 12px;
		min-height: 0;
	}
	.canvas {
		overflow: hidden;
		padding: 0 51px 0 43px;
		background: #b9b9b9;
	}
	.slide {
		display: flex;
		flex-direction: column;
		justify-content: space-between;
		height: 416px;
		border: solid #7d7d7d;
		border-width: 0 2px 2px 2px;
		background: #2a6099;
		box-shadow: 1px 1px 2px rgba(0, 0, 0, .3);
	}
	.fifth {
		padding: 12px 0 0 292px;
		font: 29px/34px "Liberation Sans", sans-serif;
		color: #000;
	}
	.fifth span {
		display: inline-block;
		width: 25px;
		font-family: "Noto Sans", sans-serif;
	}
	.areas {
		display: grid;
		grid-template-columns: 215fr 33fr 386fr 25fr 215fr;
		margin: 0 76px -2px;
	}
	.area {
		display: flex;
		flex-direction: column;
		height: 53px;
		padding: 7px 7px 0 9px;
		border: 1px dashed #b9bcc0;
	}
	.area em {
		font: italic 20px/21px "Liberation Serif", serif;
		color: #800080;
	}
	.area span {
		font: 20px/21px "DejaVu Sans", sans-serif;
		text-align: right;
		color: #c0c0c0;
	}
	.area.mid {
		grid-column: 3;
	}
	.area.mid em {
		text-align: center;
	}
	.area.end {
		grid-column: 5;
	}
	.area.end em {
		padding-right: 4px;
		text-align: right;
	}
	.vscroll {
		display: flex;
		align-items: flex-end;
		padding: 0 3px;
	}
	.vscroll .bar {
		width: 6px;
		height: 51%;
		margin-bottom: 3px;
	}
	.hscroll {
		padding: 3px 0 0 2px;
	}
	.hscroll .bar {
		width: 36%;
		height: 6px;
		margin-left: 32%;
	}
	.bar {
		border-radius: 3px;
		background: #888;
	}

	/* sidebar */
	.sidebar {
		display: flex;
		width: 502px;
	}
	.deck {
		flex: 1;
		padding-top: 3px;
	}
	.deck-title, .panel-title {
		display: flex;
		align-items: center;
		padding: 0 6px 0 2px;
	}
	.deck-title {
		height: 22px;
		margin-bottom: 1px;
	}
	.panel-title {
		height: 18px;
		background: #ebebeb;
	}
	.deck-title h2, .panel-title h3 {
		flex: 1;
		padding-left: 2px;
	}
	.deck-title h2 {
		padding-left: 6px;
	}
	.panel-title button {
		margin-right: -4px;
	}
	.form {
		display: grid;
		grid-template-columns: 184px 158px;
		gap: 3px 7px;
		padding-top: 6px;
	}
	.form > label {
		line-height: 34px;
		text-align: right;
	}
	.field {
		grid-column: 2;
	}
	.form .push {
		padding: 0;
	}
	.combo {
		position: relative;
	}
	.combo select {
		width: 100%;
		height: 34px;
		padding: 0 11px;
		appearance: none;
		border: 1px solid #c8c8c8;
		border-radius: 6px;
		font: inherit;
		color: #3d3d3d;
		background: #fff;
		opacity: 1;
	}
	.combo :global(svg) {
		position: absolute;
		top: 14px;
		right: 12px;
		pointer-events: none;
	}
	.combo.off, .combo.off select {
		color: #9a9a9a;
		background: #fafafa;
	}
	.checks {
		margin: -2px 0 -1px;
		padding-left: 4px;
		color: #9a9a9a;
	}
	.checks label {
		display: flex;
		align-items: center;
		gap: 4px;
		height: 25px;
		white-space: nowrap;
	}
	.checks input {
		display: grid;
		place-items: center;
		width: 16px;
		height: 16px;
		margin: 0;
		appearance: none;
		border: 1px solid #c0c0c0;
		border-radius: 3px;
	}
	.checks input:checked::before {
		content: "";
		width: 5px;
		height: 9px;
		margin-top: -3px;
		border: solid #8a8a8a;
		border-width: 0 2px 2px 0;
		transform: rotate(40deg);
	}
	.tabs {
		display: flex;
		flex-direction: column;
		gap: 7px;
		width: 50px;
		padding: 0 10px 0 4px;
	}
	.tab, .tab-menu {
		height: 35px;
		border-radius: 6px;
	}
	.tab-menu {
		height: 39px;
	}

	/* status bar */
	.status {
		display: flex;
		align-items: center;
		height: 21px;
		padding-top: 2px;
		border-top: 1px solid #b5b5b5;
		font-size: 12px;
		line-height: 16px;
	}
	.cell {
		display: flex;
		align-items: center;
		height: 14px;
		border-right: 1px solid #dcdcdc;
		white-space: nowrap;
	}
	.count {
		width: 102px;
		padding-left: 10px;
	}
	.filler {
		flex: 490;
	}
	.layout {
		flex: 399;
		padding-left: 9px;
	}
	.pos {
		width: 217px;
		padding-left: 10px;
		gap: 5px;
	}
	.pos span + svg {
		margin-left: 6px;
	}
	.saved {
		justify-content: center;
		width: 22px;
	}
	.sign {
		width: 29px;
	}
	.lang {
		flex: 378;
		justify-content: center;
	}
	.fit {
		justify-content: center;
		width: 21px;
	}
	.zoomer {
		justify-content: space-between;
		width: 144px;
		padding: 0 7px 0 9px;
	}
	.zoomer input {
		width: 98px;
		height: 14px;
		margin: 0;
		appearance: none;
		background: linear-gradient(#999, #999) center / 100% 2px no-repeat;
	}
	.zoomer input::-webkit-slider-thumb {
		width: 8px;
		height: 8px;
		appearance: none;
		border: 1px solid #555;
		border-radius: 50%;
		background: #fff;
	}
	.percent {
		width: 47px;
		padding-left: 7px;
		border: 0;
	}

	.pointer {
		position: absolute;
		left: 1377px;
		top: 854px;
	}
</style>
